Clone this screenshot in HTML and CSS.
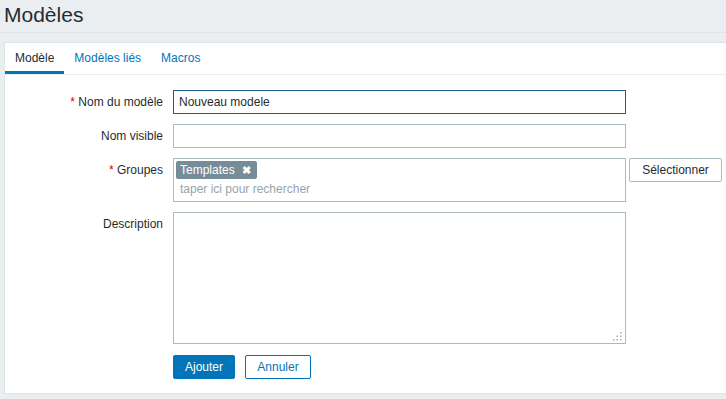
FILE: index.html
```html
<!DOCTYPE html>
<html lang="fr">

<head>
  <meta charset="UTF-8" />
  <title>Modèles</title>
  <link rel="stylesheet" href="styles.css">
</head>

<body>
  <header class="head">
    <h1 class="title">Modèles</h1>
  </header>
  <div class="box">
    <ul class="tabs">
      <li class="tab active">Modèle</li>
      <li class="tab">Modèles liés</li>
      <li class="tab">Macros</li>
    </ul>
    <form class="form">
      <label class="lbl"><span class="req">*</span> Nom du modèle</label>
      <div class="field">
        <input class="inp focus" value="Nouveau modele" />
      </div>

      <label class="lbl">Nom visible</label>
      <div class="field">
        <input class="inp" />
      </div>

      <label class="lbl"><span class="req">*</span> Groupes</label>
      <div class="field row">
        <div class="multi">
          <div class="tags">
            <span class="tag">Templates <span class="x">&#10006;</span></span>
          </div>
          <div class="ph">taper ici pour rechercher</div>
        </div>
        <button type="button" class="btn-alt">Sélectionner</button>
      </div>

      <label class="lbl">Description</label>
      <div class="field area-wrap">
        <textarea class="area"></textarea>
        <svg class="grip" width="9" height="9" viewBox="0 0 9 9">
          <rect x="7" y="0" width="1.5" height="1.5" />
          <rect x="3.5" y="3.5" width="1.5" height="1.5" />
          <rect x="7" y="3.5" width="1.5" height="1.5" />
          <rect x="0" y="7" width="1.5" height="1.5" />
          <rect x="3.5" y="7" width="1.5" height="1.5" />
          <rect x="7" y="7" width="1.5" height="1.5" />
        </svg>
      </div>

      <span></span>
      <div class="field actions">
        <button type="button" class="btn">Ajouter</button>
        <button type="button" class="btn-out">Annuler</button>
      </div>
    </form>
  </div>
</body>

</html>
```

FILE: styles.css
```css
body {
  margin: 0;
  padding: 0;
  background: #ebeef0;
  font-family: "Liberation Sans", Arial, sans-serif;
  font-size: 12px;
  color: #1f2c33;
}

.head {
  height: 33px;
  padding: 3px 4px 0;
  box-sizing: border-box;
  border-bottom: 1px solid #dfe4e7;
  margin-bottom: 9px;
}

.title {
  margin: 0;
  font-size: 21px;
  font-weight: normal;
  line-height: 24px;
}

.box {
  margin-left: 4px;
  background: #fff;
  border: 1px solid #dfe4e7;
  border-right: none;
  height: 352px;
  box-sizing: border-box;
}

.tabs {
  list-style: none;
  margin: 0;
  padding: 0;
  display: flex;
  border-bottom: 1px solid #ebeef0;
}

.tab {
  padding: 2px 10px 0;
  height: 26px;
  line-height: 26px;
  color: #0275b8;
  border-bottom: 3px solid transparent;
}

.tab.active {
  color: #1f2c33;
  border-bottom-color: #0275b8;
}

.form {
  display: grid;
  grid-template-columns: 158px auto;
  column-gap: 10px;
  row-gap: 10px;
  padding-top: 15px;
}

.lbl {
  text-align: right;
  line-height: 24px;
}

.req {
  color: #dc0000;
}

.field {
  display: flex;
}

.inp {
  width: 453px;
  height: 24px;
  box-sizing: border-box;
  border: 1px solid #acbbc2;
  padding: 0 5px;
  font-family: inherit;
  font-size: 12px;
  color: #1f2c33;
  outline: none;
}

.inp.focus {
  border-color: #1a5e8f;
}

.multi {
  width: 453px;
  height: 44px;
  box-sizing: border-box;
  border: 1px solid #acbbc2;
  padding: 2px;
}

.tags {
  height: 18px;
}

.tag {
  display: inline-block;
  height: 18px;
  line-height: 18px;
  padding: 0 6px 0 4px;
  background: #768d99;
  color: #fff;
  border-radius: 2px;
  font-size: 12px;
}

.x {
  font-size: 11px;
  margin-left: 4px;
  font-weight: bold;
}

.ph {
  color: #98a4aa;
  padding-left: 4px;
  line-height: 20px;
}

.btn-alt {
  margin-left: 3px;
  width: 93px;
  height: 24px;
  background: #fff;
  border: 1px solid #acbbc2;
  border-radius: 2px;
  font-family: inherit;
  font-size: 12px;
  color: #1f2c33;
  padding: 0;
}

.area-wrap {
  position: relative;
  width: 453px;
}

.area {
  width: 453px;
  height: 132px;
  box-sizing: border-box;
  border: 1px solid #acbbc2;
  font-family: inherit;
  outline: none;
  margin: 0;
  resize: none;
  display: block;
}

.grip {
  position: absolute;
  right: 4px;
  bottom: 3px;
  fill: #a9b1b6;
}

.actions {
  margin-top: 1px;
}

.btn,
.btn-out {
  height: 24px;
  border-radius: 2px;
  font-family: inherit;
  font-size: 12px;
  padding: 0;
  cursor: pointer;
}

.btn {
  width: 62px;
  background: #0275b8;
  border: 1px solid #0275b8;
  color: #fff;
}

.btn-out {
  width: 66px;
  margin-left: 10px;
  background: #fff;
  border: 1px solid #0275b8;
  color: #0275b8;
}
```
